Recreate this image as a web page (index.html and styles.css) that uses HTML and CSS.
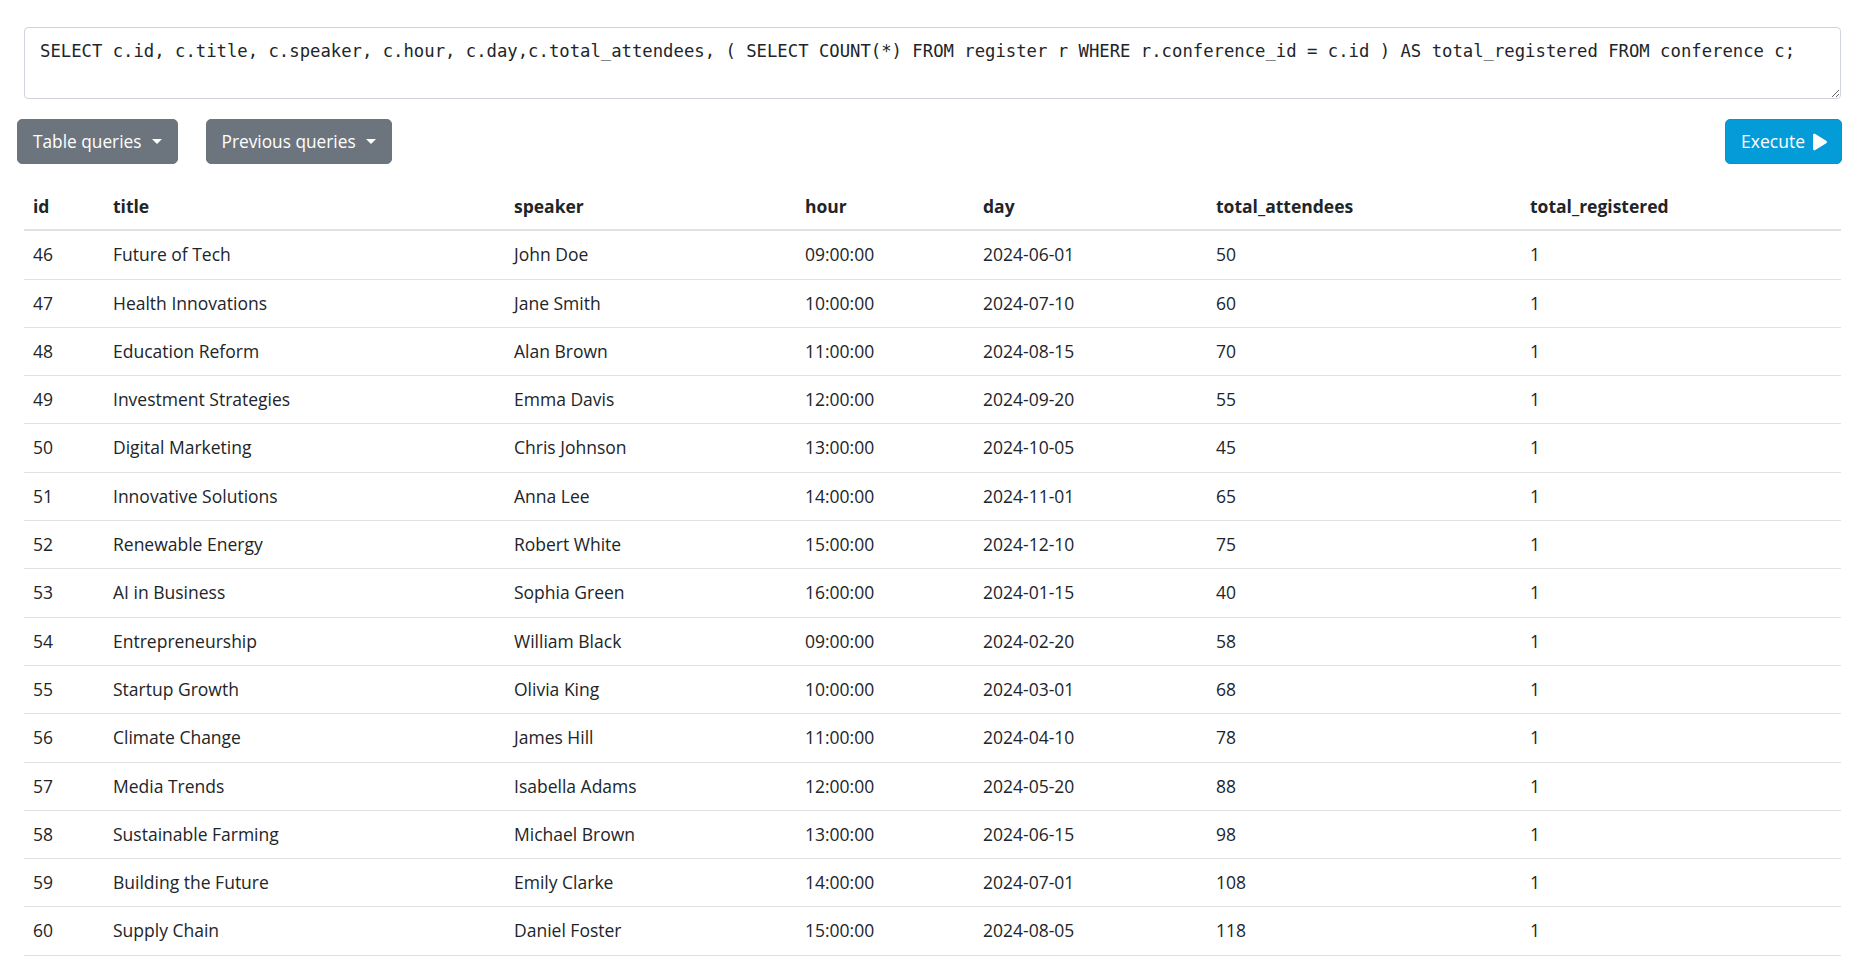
FILE: index.html
```html
<!DOCTYPE html>
<html lang="en">
<head>
<meta charset="utf-8">
<title>SQL console</title>
<link rel="stylesheet" href="styles.css">
</head>
<body>
<div class="page">
  <textarea class="query" spellcheck="false">SELECT c.id, c.title, c.speaker, c.hour, c.day,c.total_attendees, ( SELECT COUNT(*) FROM register r WHERE r.conference_id = c.id ) AS total_registered FROM conference c;</textarea>
  <div class="toolbar">
    <div class="left-tools">
      <button class="btn btn-secondary">Table queries<span class="caret"></span></button>
      <button class="btn btn-secondary">Previous queries<span class="caret"></span></button>
    </div>
    <button class="btn btn-execute">Execute<svg class="play" viewBox="0 0 18 18" width="18" height="18"><path d="M3 2.2 C3 0.9 4.3 0.3 5.3 1 L16.2 7.8 C17.2 8.4 17.2 9.6 16.2 10.2 L5.3 17 C4.3 17.7 3 17.1 3 15.8 Z" fill="#fff"/></svg></button>
  </div>
  <table class="results">
    <colgroup>
      <col class="c-id"><col class="c-title"><col class="c-speaker"><col class="c-hour"><col class="c-day"><col class="c-att"><col class="c-reg">
    </colgroup>
    <thead>
      <tr><th>id</th><th>title</th><th>speaker</th><th>hour</th><th>day</th><th>total_attendees</th><th>total_registered</th></tr>
    </thead>
    <tbody>
      <tr><td>46</td><td>Future of Tech</td><td>John Doe</td><td>09:00:00</td><td>2024-06-01</td><td>50</td><td>1</td></tr>
      <tr><td>47</td><td>Health Innovations</td><td>Jane Smith</td><td>10:00:00</td><td>2024-07-10</td><td>60</td><td>1</td></tr>
      <tr><td>48</td><td>Education Reform</td><td>Alan Brown</td><td>11:00:00</td><td>2024-08-15</td><td>70</td><td>1</td></tr>
      <tr><td>49</td><td>Investment Strategies</td><td>Emma Davis</td><td>12:00:00</td><td>2024-09-20</td><td>55</td><td>1</td></tr>
      <tr><td>50</td><td>Digital Marketing</td><td>Chris Johnson</td><td>13:00:00</td><td>2024-10-05</td><td>45</td><td>1</td></tr>
      <tr><td>51</td><td>Innovative Solutions</td><td>Anna Lee</td><td>14:00:00</td><td>2024-11-01</td><td>65</td><td>1</td></tr>
      <tr><td>52</td><td>Renewable Energy</td><td>Robert White</td><td>15:00:00</td><td>2024-12-10</td><td>75</td><td>1</td></tr>
      <tr><td>53</td><td>AI in Business</td><td>Sophia Green</td><td>16:00:00</td><td>2024-01-15</td><td>40</td><td>1</td></tr>
      <tr><td>54</td><td>Entrepreneurship</td><td>William Black</td><td>09:00:00</td><td>2024-02-20</td><td>58</td><td>1</td></tr>
      <tr><td>55</td><td>Startup Growth</td><td>Olivia King</td><td>10:00:00</td><td>2024-03-01</td><td>68</td><td>1</td></tr>
      <tr><td>56</td><td>Climate Change</td><td>James Hill</td><td>11:00:00</td><td>2024-04-10</td><td>78</td><td>1</td></tr>
      <tr><td>57</td><td>Media Trends</td><td>Isabella Adams</td><td>12:00:00</td><td>2024-05-20</td><td>88</td><td>1</td></tr>
      <tr><td>58</td><td>Sustainable Farming</td><td>Michael Brown</td><td>13:00:00</td><td>2024-06-15</td><td>98</td><td>1</td></tr>
      <tr><td>59</td><td>Building the Future</td><td>Emily Clarke</td><td>14:00:00</td><td>2024-07-01</td><td>108</td><td>1</td></tr>
      <tr><td>60</td><td>Supply Chain</td><td>Daniel Foster</td><td>15:00:00</td><td>2024-08-05</td><td>118</td><td>1</td></tr>
    </tbody>
  </table>
</div>
</body>
</html>
```
FILE: styles.css
```css
* { box-sizing: border-box; }
html, body { margin: 0; padding: 0; background: #fff; }
body {
  font-family: "Open Sans", "Noto Sans", sans-serif;
  font-size: 17.5px;
  color: #212529;
}
.page {
  padding: 27px 12px 0 17px;
  display: flex;
  flex-direction: column;
}
.query {
  display: block;
  margin: 0 0 0 7px;
  width: calc(100% - 7px);
  height: 72px;
  padding: 10px 15px 6px;
  border: 1px solid #ced4da;
  border-radius: 4px;
  font-family: "DejaVu Sans Mono", "Liberation Mono", monospace;
  font-size: 17.25px;
  line-height: 26px;
  color: #212529;
  resize: vertical;
  outline: none;
}
.toolbar {
  display: flex;
  justify-content: space-between;
  align-items: center;
  margin-top: 20px;
  margin-right: -1px;
}
.left-tools { display: flex; gap: 28px; }
.btn {
  display: inline-flex;
  align-items: center;
  height: 45px;
  padding: 8px 15px;
  border: 1px solid transparent;
  border-radius: 5px;
  font-family: inherit;
  font-size: 17.5px;
  line-height: 27px;
  color: #fff;
  cursor: pointer;
}
.btn-secondary {
  background: #6c757d;
  border-color: #6c757d;
  padding: 8px 15px 8px 15px;
  font-size: 17.3px;
}
.caret {
  display: inline-block;
  margin-left: 10px;
  width: 0; height: 0;
  border-top: 5.5px solid #fff;
  border-left: 5px solid transparent;
  border-right: 5px solid transparent;
}
.btn-execute {
  background: #049cd8;
  border-color: #0893c9;
  padding: 8px 13px 8px 15px;
}
.play { margin-left: 5px; display: block; }
.results {
  margin: 19px 0 0 7px;
  width: calc(100% - 7px);
  border-collapse: collapse;
  table-layout: fixed;
}
.c-id { width: 80px; }
.c-title { width: 401px; }
.c-speaker { width: 291px; }
.c-hour { width: 178px; }
.c-day { width: 233px; }
.c-att { width: 314px; }
.c-reg { width: auto; }
.results th, .results td {
  text-align: left;
  padding: 12px 9px;
  line-height: 23.3px;
  border-bottom: 1px solid #dee2e6;
  white-space: nowrap;
}
.results th { font-weight: 700; border-bottom: 2px solid #dee2e6; padding-bottom: 11px; }
```
